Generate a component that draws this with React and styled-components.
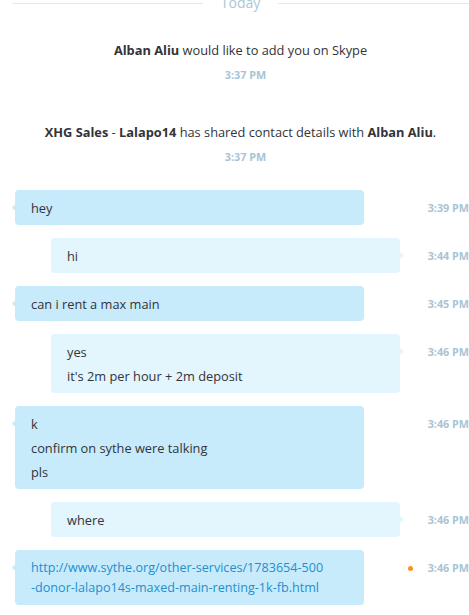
import React from "react";
import styled, { createGlobalStyle, css } from "styled-components";

const Global = createGlobalStyle`
  html, body { margin: 0; padding: 0; background: #ffffff; }
  body { font-family: "Open Sans", "Noto Sans", sans-serif; color: #333338; overflow: hidden; }
`;

const Page = styled.div`
  width: 469px;
  height: 615px;
  overflow: hidden;
  display: flex;
  flex-direction: column;
`;

const Divider = styled.div`
  margin-top: -4px;
  padding-left: 12px;
  display: flex;
  align-items: center;
  gap: 18px;
  height: 14px;
  &::before, &::after {
    content: "";
    flex: 1;
    height: 1px;
    background: #e6e8ea;
  }
`;

const DividerLabel = styled.span`
  font-size: 14px;
  line-height: 14px;
  color: #a9c8da;
`;

const Notice = styled.div`
  padding: 30px 0 9px 12px;
  display: flex;
  flex-direction: column;
  align-items: center;
`;

const NoticeText = styled.div`
  font-size: 12.8px;
  line-height: 20px;
  color: #333338;
  b { font-weight: 700; }
`;

const NoticeTime = styled.div`
  margin-top: 7px;
  padding-left: 10px;
  font-size: 10.8px;
  line-height: 16px;
  font-weight: 700;
  color: #a7c4d6;
`;

const List = styled.div`
  padding-top: 16px;
  display: flex;
  flex-direction: column;
  gap: 13px;
`;

const Row = styled.div`
  display: flex;
  align-items: flex-start;
  padding-left: 15px;
`;

const BubbleSlot = styled.div`
  flex: 1;
  display: flex;
  padding: ${(p) => (p.$out ? "0 0 0 36px" : "0 36px 0 0")};
`;

const Bubble = styled.div`
  position: relative;
  flex: 1;
  border-radius: 4px;
  padding: 8px 16px 7px;
  display: flex;
  flex-direction: column;
  gap: 4px;
  background: ${(p) => (p.$out ? "#e3f5fd" : "#c7ebfb")};
  &::before {
    content: "";
    position: absolute;
    top: 15px;
    width: 5px;
    height: 5px;
    border-radius: 1px;
    background: inherit;
    transform: rotate(45deg);
    ${(p) => (p.$out ? css`right: -2.5px;` : css`left: -2.5px;`)}
  }
`;

const Line = styled.div`
  font-size: 12.8px;
  line-height: 20px;
  color: #333338;
`;

const Link = styled.a`
  font-size: 12.6px;
  line-height: 20px;
  color: #1f8fcf;
  text-decoration: none;
  span { display: block; }
`;

const TimeCol = styled.div`
  width: 69px;
  display: flex;
  align-items: center;
  padding-top: 10px;
  height: 16px;
`;

const Dot = styled.span`
  width: 5px;
  height: 5px;
  border-radius: 50%;
  background: #f7931e;
  margin-left: 8px;
`;

const Time = styled.span`
  margin-left: auto;
  font-size: 10.8px;
  line-height: 16px;
  font-weight: 700;
  color: #a7c4d6;
  white-space: nowrap;
`;

const messages = [
  { out: false, time: "3:39 PM", lines: ["hey"] },
  { out: true, time: "3:44 PM", lines: ["hi"] },
  { out: false, time: "3:45 PM", lines: ["can i rent a max main"] },
  { out: true, time: "3:46 PM", lines: ["yes", "it's 2m per hour + 2m deposit"] },
  { out: false, time: "3:46 PM", lines: ["k", "confirm on sythe were talking", "pls"] },
  { out: true, time: "3:46 PM", lines: ["where"] },
  {
    out: false,
    time: "3:46 PM",
    dot: true,
    link: [
      "http://www.sythe.org/other-services/1783654-500",
      "-donor-lalapo14s-maxed-main-renting-1k-fb.html",
    ],
  },
];

export default function App() {
  return (
    <Page>
      <Global />
      <Divider>
        <DividerLabel>Today</DividerLabel>
      </Divider>
      <Notice>
        <NoticeText>
          <b>Alban Aliu</b> would like to add you on Skype
        </NoticeText>
        <NoticeTime>3:37 PM</NoticeTime>
      </Notice>
      <Notice>
        <NoticeText>
          <b>XHG Sales</b> - <b>Lalapo14</b> has shared contact details with <b>Alban Aliu</b>.
        </NoticeText>
        <NoticeTime>3:37 PM</NoticeTime>
      </Notice>
      <List>
        {messages.map((m, i) => (
          <Row key={i}>
            <BubbleSlot $out={m.out}>
              <Bubble $out={m.out}>
                {m.lines && m.lines.map((l, j) => <Line key={j}>{l}</Line>)}
                {m.link && (
                  <Link href="#">
                    {m.link.map((l, j) => (
                      <span key={j}>{l}</span>
                    ))}
                  </Link>
                )}
              </Bubble>
            </BubbleSlot>
            <TimeCol>
              {m.dot && <Dot />}
              <Time>{m.time}</Time>
            </TimeCol>
          </Row>
        ))}
      </List>
    </Page>
  );
}
